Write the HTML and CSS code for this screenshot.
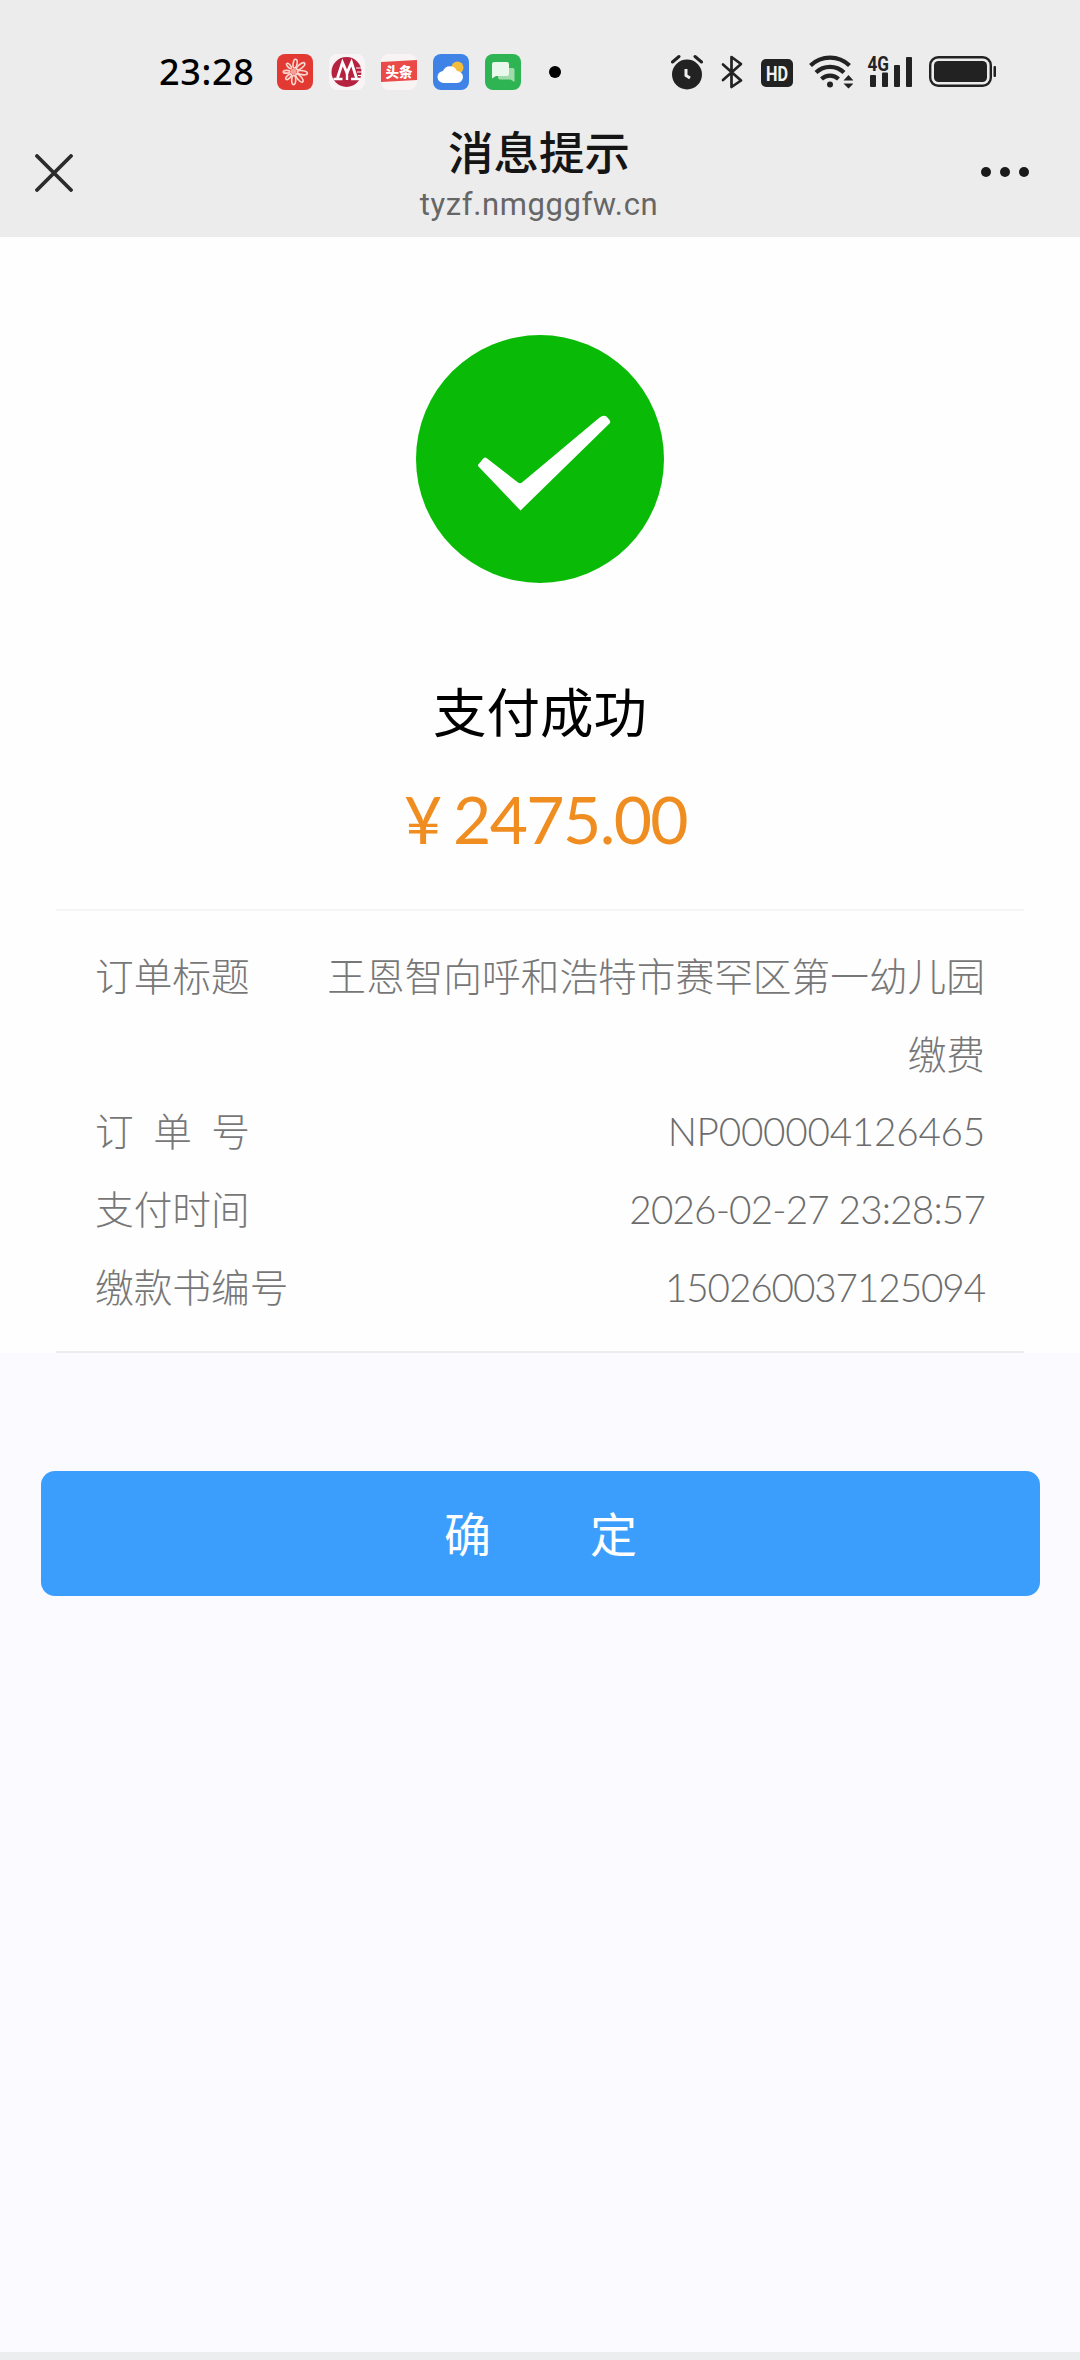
FILE: index.html
```html
<!DOCTYPE html>
<html lang="zh-CN">
<head>
    <meta charset="UTF-8">
    <meta name="viewport" content="width=device-width, initial-scale=1.0">
    <title>消息提示</title>
    <link rel="stylesheet" href="styles.css">
</head>
<body>

    <header class="top">
        <div class="status-bar">
            <div class="status-left">
                <span class="clock">23:28</span>
                <svg class="app-icon" width="36" height="36" viewBox="0 0 36 36">
                    <rect width="36" height="36" rx="8" fill="#e23a32"/>
                    <g fill="none" stroke="#fbd9d0" stroke-width="1.6">
                        <ellipse cx="17" cy="9.500" rx="2" ry="4.400" transform="rotate(8 17 17.5)"/>
                        <ellipse cx="17" cy="9" rx="2" ry="5" transform="rotate(52 17 17.5)"/>
                        <ellipse cx="17" cy="9" rx="2" ry="5" transform="rotate(98 17 17.5)"/>
                        <ellipse cx="17" cy="9" rx="2" ry="5" transform="rotate(140 17 17.5)"/>
                        <ellipse cx="17" cy="9" rx="2" ry="4.600" transform="rotate(182 17 17.5)"/>
                        <ellipse cx="17" cy="10" rx="1.600" ry="3.600" transform="rotate(226 17 17.5)"/>
                        <ellipse cx="17" cy="10" rx="1.400" ry="3.200" transform="rotate(268 17 17.5)"/>
                        <ellipse cx="17" cy="10" rx="1.400" ry="3.200" transform="rotate(318 17 17.5)"/>
                    </g>
                    <circle cx="16.500" cy="17.500" r="3" fill="#f2a09a"/>
                </svg>
                <svg class="app-icon" width="36" height="36" viewBox="0 0 36 36">
                    <rect width="36" height="36" rx="8" fill="#f8f4f5"/>
                    <circle cx="17.500" cy="18" r="15" fill="#b5223f"/>
                    <path d="M8.500 24 13.500 8.500 18 19l4.500-10.500L27.500 24" fill="none" stroke="#fff" stroke-width="2.800"/>
                    <path d="M4.500 25h9M18 18v8M22 25h9" stroke="#fff" stroke-width="2.400"/>
                    <path d="M27 14h6M28 18h6M29 21.500h4" stroke="#fff" stroke-width="1.200"/>
                </svg>
                <svg class="app-icon" width="36" height="36" viewBox="0 0 36 36">
                    <rect width="36" height="36" rx="8" fill="#f7f4f3"/>
                    <path d="M0 8 36 6v20L0 28z" fill="#ea4a48"/>
                    <text x="18" y="22.500" class="toutiao" text-anchor="middle">头条</text>
                </svg>
                <svg class="app-icon" width="36" height="36" viewBox="0 0 36 36">
                    <rect width="36" height="36" rx="8" fill="#3f83e6"/>
                    <circle cx="24.500" cy="13.500" r="6" fill="#f3bd3a"/>
                    <path d="M11 29a6 6 0 0 1-1-12 7.500 7.500 0 0 1 14 0 6 6 0 0 1 0 12z" fill="#fff"/>
                </svg>
                <svg class="app-icon" width="36" height="36" viewBox="0 0 36 36">
                    <rect width="36" height="36" rx="8" fill="#2eb453"/>
                    <path d="M15 14h13a1.500 1.500 0 0 1 1.500 1.500V28l-4-2.500H15a2 2 0 0 1-2-2V16a2 2 0 0 1 2-2z" fill="#9fdcab"/>
                    <path d="M9 8h13a2 2 0 0 1 2 2v10a2 2 0 0 1-2 2H11l-4 2.500V10a2 2 0 0 1 2-2z" fill="#e9f8ec"/>
                </svg>
                <span class="notice-dot"></span>
            </div>

            <div class="status-right">
                <svg width="32" height="36" viewBox="0 0 32 36">
                    <circle cx="16" cy="20.500" r="15" fill="#222"/>
                    <path d="M1.500 8 8 2.500M24 2.500 30.500 8" stroke="#222" stroke-width="3" stroke-linecap="round"/>
                    <path d="M15 15v6.500l4 2.500" fill="none" stroke="#eee" stroke-width="3"/>
                </svg>
                <svg width="22" height="36" viewBox="0 0 22 36">
                    <path d="M2 10.500 20 26.500 10.500 33V3L20 10 2 26" fill="none" stroke="#222" stroke-width="2.700" stroke-linejoin="round" stroke-linecap="round"/>
                </svg>
                <svg width="32" height="36" viewBox="0 0 32 36">
                    <rect y="5" width="32" height="28" rx="5" fill="#222"/>
                    <text x="5" y="26.500" class="hd" textLength="22" lengthAdjust="spacingAndGlyphs">HD</text>
                </svg>
                <svg width="44" height="36" viewBox="0 0 44 36">
                    <g fill="none" stroke="#222" stroke-width="4.200">
                        <path d="M1.500 11.500a28 28 0 0 1 39 0"/>
                        <path d="M7 18.500a20 20 0 0 1 28 0"/>
                        <path d="M12.500 25a12.500 12.500 0 0 1 17 0"/>
                    </g>
                    <circle cx="21" cy="30.500" r="3" fill="#222"/>
                    <path d="m39.500 21 5 5.500h-10zM39.500 34.500l5-5h-10z" fill="#222"/>
                </svg>
                <svg class="signal" width="46" height="36" viewBox="0 0 46 36">
                    <text x="0.500" y="17" class="net" textLength="21.500" lengthAdjust="spacingAndGlyphs">4G</text>
                    <g fill="#222">
                        <rect x="3" y="21" width="6" height="12" rx="1"/>
                        <rect x="15" y="18.500" width="6" height="14.500" rx="1"/>
                        <rect x="27" y="11" width="6" height="22" rx="1"/>
                        <rect x="39" y="3" width="6" height="30" rx="1"/>
                    </g>
                </svg>
                <svg width="68" height="36" viewBox="0 0 68 36">
                    <rect x="1.200" y="3.200" width="60.600" height="28.600" rx="8" fill="none" stroke="#222" stroke-width="2.400"/>
                    <rect x="5" y="7" width="53" height="21" rx="4.500" fill="#222"/>
                    <rect x="64.500" y="12" width="2.500" height="11" rx="1" fill="#222"/>
                </svg>
            </div>
        </div>

        <div class="nav-bar">
            <svg class="close" width="38" height="38" viewBox="0 0 38 38">
                <path d="M2 2l34 34M36 2 2 36" stroke="#2b2b2b" stroke-width="3.800" stroke-linecap="round"/>
            </svg>
            <div class="nav-title">
                <h1>消息提示</h1>
                <p>tyzf.nmgggfw.cn</p>
            </div>
            <div class="more"><i></i><i></i><i></i></div>
        </div>
    </header>

    <main class="result">
        <svg class="success" width="248" height="248" viewBox="0 0 248 248">
            <circle cx="124" cy="124" r="124" fill="#09bb07"/>
            <path d="M62.500 131.500q-1-1 0-2.200l5-6q1.500-1.500 3-.4L102 147.500q2 1.500 4 0l77-64.500q5-4 8-1l2.500 3q1.500 2 0 3.500L104.500 175.500z" fill="#fff"/>
        </svg>
        <h2>支付成功</h2>
        <div class="amount"><span class="yen">¥</span><span>2475.00</span></div>

        <div class="details">
            <div class="row">
                <span class="label">订单标题</span>
                <span class="value title">王恩智向呼和浩特市赛罕区第一幼儿园缴费</span>
            </div>
            <div class="row">
                <span class="label spread"><b>订</b><b>单</b><b>号</b></span>
                <span class="value order">NP000004126465</span>
            </div>
            <div class="row">
                <span class="label">支付时间</span>
                <span class="value time">2026-02-27 23:28:57</span>
            </div>
            <div class="row">
                <span class="label">缴款书编号</span>
                <span class="value bill">150260037125094</span>
            </div>
        </div>
    </main>

    <div class="action">
        <button class="confirm"><span>确</span><span>定</span></button>
    </div>

    <div class="bottom-bar"></div>

</body>
</html>
```
FILE: styles.css
```css
* {
    margin: 0;
    padding: 0;
    box-sizing: border-box;
}

body {
    display: flex;
    flex-direction: column;
    width: 1080px;
    height: 2360px;
    overflow: hidden;
    background-color: #fbfafe;
    font-family: "Lato", "Noto Sans CJK SC", sans-serif;
    color: #000;
}

/* Header */
.top {
    height: 237px;
    background-color: #ececec;
}

.status-bar {
    display: flex;
    justify-content: space-between;
    height: 126px;
    padding: 54px 83px 0 159px;
}

.status-left {
    display: flex;
    align-items: center;
    height: 36px;
}

.clock {
    width: 118px;
    font-family: "Noto Sans", sans-serif;
    font-size: 36px;
    line-height: 36px;
    letter-spacing: 0.7px;
    font-weight: 500;
}

.app-icon {
    margin-right: 16px;
}

.toutiao {
    font-family: "Noto Sans CJK SC", sans-serif;
    font-size: 13.5px;
    font-weight: 900;
    fill: #fff;
}

.notice-dot {
    width: 12px;
    height: 12px;
    margin-left: 12px;
    border-radius: 50%;
    background-color: #000;
}

.status-right {
    display: flex;
    height: 36px;
}

.status-right svg:nth-child(1) { margin-right: 18px; }
.status-right svg:nth-child(2) { margin-right: 18px; }
.status-right svg:nth-child(3) { margin-right: 16px; }
.status-right svg:nth-child(4) { margin-right: 14px; }
.status-right svg:nth-child(5) { margin-right: 16px; }

.signal {
    overflow: visible;
}

.hd {
    font-family: Roboto, sans-serif;
    font-size: 21px;
    font-weight: 700;
    fill: #f2f2f2;
}

.net {
    font-family: Roboto, sans-serif;
    font-size: 20px;
    font-weight: 700;
    fill: #222;
}

.nav-bar {
    display: flex;
    justify-content: space-between;
    height: 111px;
    padding: 0 51px 0 35px;
}

.nav-bar .close {
    margin-top: 28px;
}

.nav-title {
    text-align: center;
    margin-left: 24px;
}

.nav-title h1 {
    height: 55px;
    font-size: 45.5px;
    line-height: 54px;
    font-weight: 500;
    color: #151515;
}

.nav-title p {
    font-family: Roboto, sans-serif;
    font-size: 31px;
    line-height: 48px;
    letter-spacing: 0.6px;
    color: #666;
}

.more {
    display: flex;
    gap: 9px;
    padding-top: 41px;
}

.more i {
    width: 10px;
    height: 10px;
    border-radius: 50%;
    background-color: #1a1a1a;
}

/* Payment result */
.result {
    display: flex;
    flex-direction: column;
    align-items: center;
    height: 1116px;
    padding-top: 98px;
    background-color: #fefefe;
}

.result h2 {
    margin-top: 89px;
    font-size: 53.5px;
    line-height: 80px;
    font-weight: 400;
}

.amount {
    display: flex;
    gap: 13px;
    height: 157px;
    margin-left: 11px;
    padding-top: 27px;
    font-size: 66px;
    line-height: 80px;
    letter-spacing: -1.6px;
    color: #ef8d20;
}

.yen {
    width: 36px;
}

.details {
    width: 968px;
    height: 444px;
    padding: 25px 39px 0;
    border-top: 2px solid #f4f4f4;
    border-bottom: 2px solid #ececef;
}

.row {
    display: flex;
    justify-content: space-between;
    font-size: 38.7px;
    line-height: 77.7px;
    font-weight: 300;
    color: #777;
}

.label,
.title {
    font-family: "Noto Sans CJK SC", sans-serif;
}

.spread {
    display: flex;
    justify-content: space-between;
    width: 155px;
}

.spread b {
    font-weight: 300;
}

.value {
    text-align: right;
}

.title {
    width: 664px;
}

.order,
.time,
.bill {
    margin: 2px 0 -2px;
    color: #6c6c6c;
}

.order {
    letter-spacing: -0.25px;
}

.time {
    letter-spacing: -0.85px;
}

.bill {
    letter-spacing: -1.1px;
}

/* Confirm button */
.action {
    padding: 118px 40px 0 41px;
}

.confirm {
    display: flex;
    justify-content: center;
    align-items: center;
    gap: 99px;
    width: 100%;
    height: 125px;
    padding-bottom: 4px;
    border: none;
    border-radius: 14px;
    background-color: #3b9efd;
    font-family: "Noto Sans CJK SC", sans-serif;
    font-size: 47px;
    color: #fff;
}

.bottom-bar {
    height: 8px;
    margin-top: auto;
    background-color: #ecedef;
}
```
